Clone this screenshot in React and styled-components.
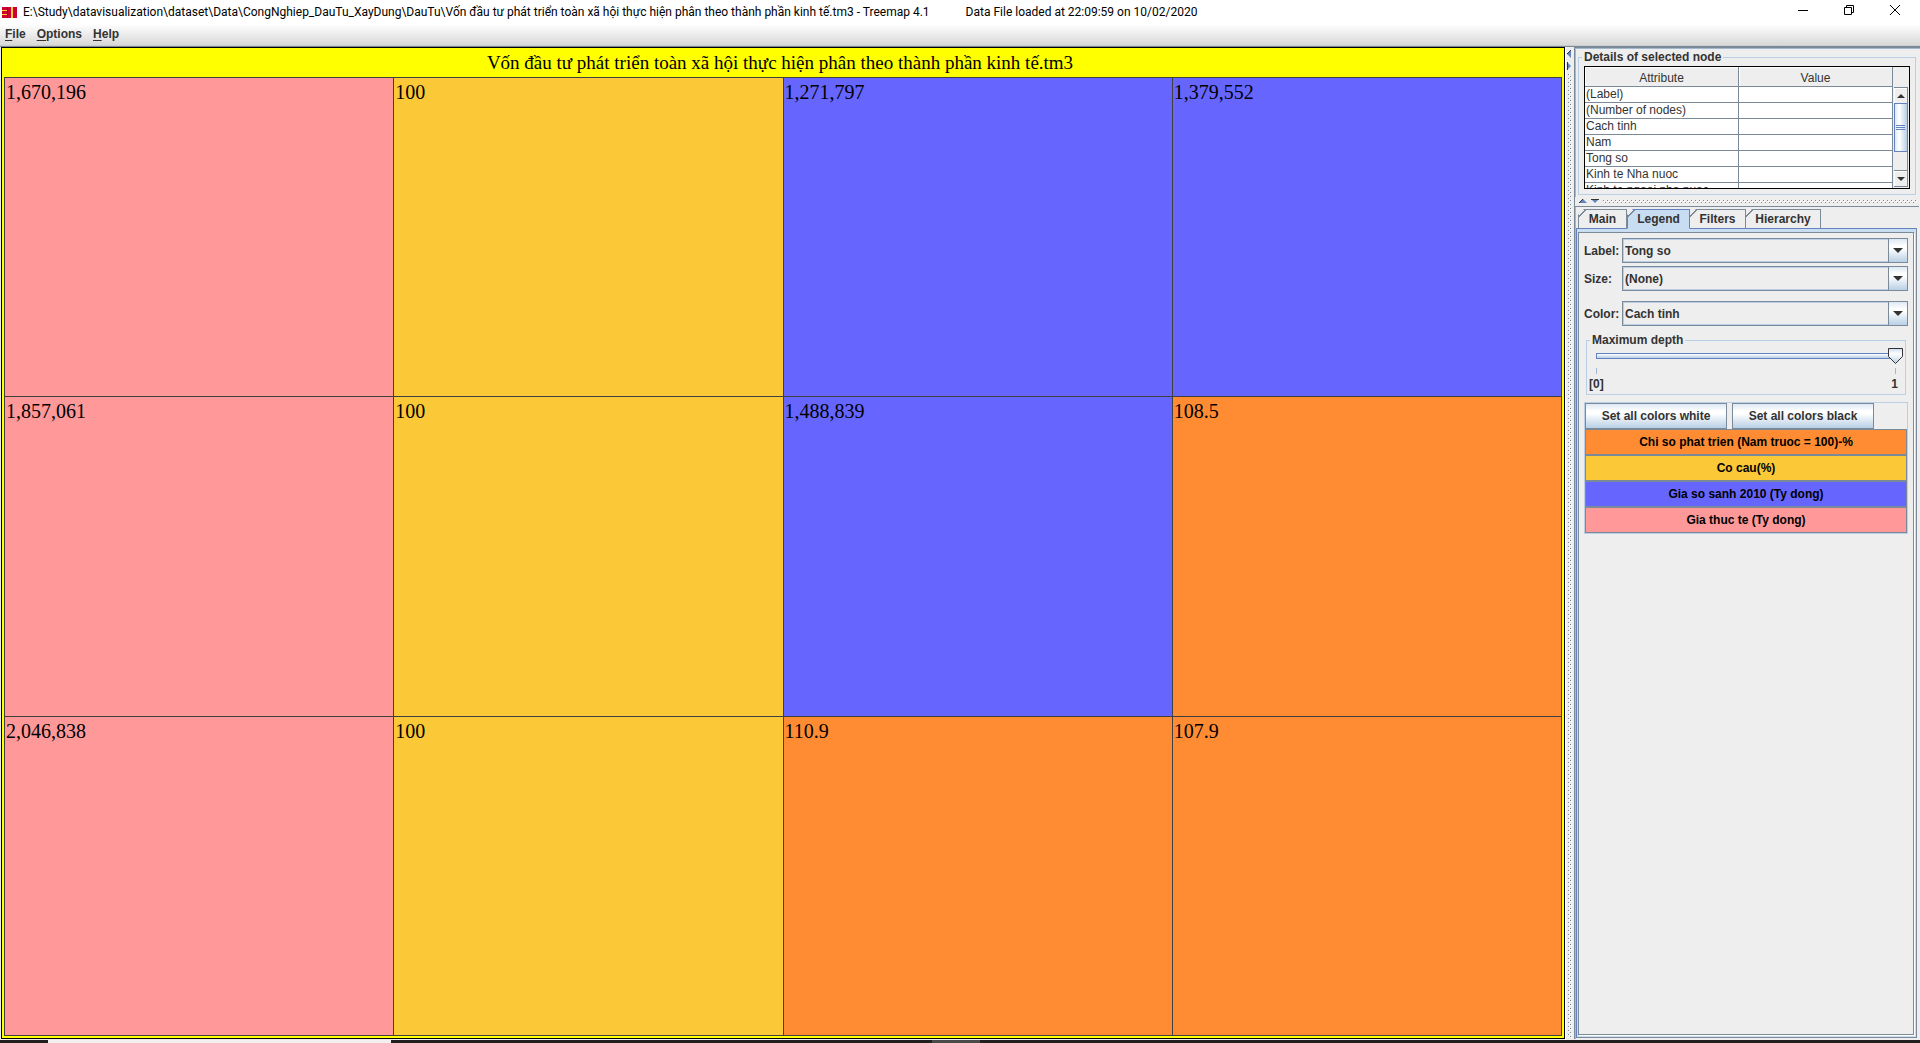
import React, { useState } from "react";
import styled, { createGlobalStyle } from "styled-components";

const steel = "#7a8a99";
const primary = "#6382bf";
const pale = "#b8cfe5";
const ink = "#333333";
const face = "#eeeeee";
const sheen = "linear-gradient(#dde8f3 0%, #ffffff 30%, #ffffff 40%, #b8cfe5 100%)";
const svgUrl = (svg) => `url("data:image/svg+xml,${encodeURIComponent(svg).replace(/'/g, "%27")}")`;
const thumbImage = svgUrl(
  "<svg xmlns='http://www.w3.org/2000/svg' width='15' height='16'><defs><linearGradient id='g' x2='0' y2='1'><stop stop-color='#c8dbee'/><stop offset='.35' stop-color='#fff'/><stop offset='1' stop-color='#b8cfe5'/></linearGradient></defs><path d='M.5.5h14v8l-7 7-7-7z' fill='url(#g)' stroke='#333'/></svg>"
);
const gripImage = svgUrl(
  `<svg xmlns='http://www.w3.org/2000/svg' width='4' height='4'><path d='M0 0h1v1H0zM2 2h1v1H2z' fill='${steel}'/><path d='M1 1h1v1H1zM3 3h1v1H3z' fill='#fff'/></svg>`
);

const Global = createGlobalStyle`
  *, *::before, *::after { box-sizing: border-box; }
  body { margin: 0; background: ${face}; overflow: hidden; }
  button, select, input { font: inherit; color: inherit; margin: 0; border-radius: 0; }
`;

const Window = styled.div`
  height: 100vh;
  display: flex;
  flex-direction: column;
  font: bold 12px/16px "Liberation Sans", Arial, sans-serif;
  color: ${ink};
`;

const TitleBar = styled.header`
  flex: none;
  height: 24px;
  display: flex;
  align-items: center;
  padding-left: 2px;
  background: #fff;
  color: #000;
  font: 12px/16px Roboto, "Open Sans", sans-serif;
  white-space: nowrap;
`;

const AppIcon = styled.svg`
  flex: none;
  margin-right: 6px;
`;

const TitleText = styled.span`
  margin-right: 36px;
`;

const Spacer = styled.span`
  flex: 1;
`;

const WindowButton = styled.button`
  width: 46px;
  height: 20px;
  padding: 0;
  border: 0;
  background: none;
  display: grid;
  place-items: center;
  align-self: start;
`;

const WindowButtons = styled.div`
  display: flex;
  align-self: start;
  padding-right: 2px;
`;

const MenuBar = styled.nav`
  flex: none;
  height: 23px;
  display: flex;
  gap: 11px;
  padding: 2px 5px 0;
  background: linear-gradient(#ffffff, #dadada 20px, #dadada);
  border-bottom: 1px solid ${steel};
  box-shadow: inset 0 -1px #cccccc;
`;

const MenuItem = styled.button`
  padding: 0;
  border: 0;
  background: none;
  height: 16px;
  &::first-letter { text-decoration: underline; text-underline-offset: 2px; }
`;

const Workspace = styled.main`
  flex: 1;
  min-height: 0;
  display: grid;
  grid-template-columns: minmax(0, 1fr) 9px 346px;
`;

const Treemap = styled.section`
  display: flex;
  flex-direction: column;
  border: 1px solid #000;
  margin: 0 0 1px 1px;
  background: #ffff00;
  padding: 0 2px 2px;
  color: #000;
  font: 20px/29px "Liberation Serif", "Times New Roman", serif;
`;

const TreemapTitle = styled.h1`
  margin: 0;
  padding-right: 6px;
  font: inherit;
  font-size: 19px;
  height: 29px;
  text-align: center;
`;

const Cells = styled.div`
  flex: 1;
  display: grid;
  grid-template-columns: repeat(4, 1fr);
  grid-template-rows: repeat(3, 1fr);
  gap: 1px;
  padding: 1px;
  background: #404040;
`;

const Cell = styled.div`
  background: ${(p) => p.$fill};
  padding-left: 1px;
`;

const Divider = styled.div`
  display: flex;
  flex-direction: ${(p) => (p.$vertical ? "column" : "row")};
  gap: 4px;
  padding: ${(p) => (p.$vertical ? "3px 0 2px 1px" : "2px 2px 2px 4px")};
  height: ${(p) => (p.$vertical ? "auto" : "9px")};
  flex: none;
  background: ${face};
  border-left: ${(p) => (p.$vertical ? "1px solid #fff" : "0")};
`;

const Grip = styled.div`
  flex: 1;
  margin: ${(p) => (p.$vertical ? "0 2px 0 1px" : "1px 0")};
  background-image: ${gripImage};
`;

const ArrowButton = styled.button`
  display: block;
  padding: 0;
  border: 0;
  background: none;
  line-height: 0;
  svg { display: block; }
`;

const Side = styled.aside`
  display: flex;
  flex-direction: column;
  min-height: 0;
  border-left: 1px solid ${steel};
  border-top: 1px solid ${steel};
  box-shadow: inset 1px 1px #a3b8cc;
  padding-right: 1px;
  margin-bottom: 1px;
`;

const Group = styled.fieldset`
  min-width: 0;
  margin: ${(p) => p.$margin};
  padding: ${(p) => p.$padding};
  border: 1px solid ${pale};
`;

const Legend = styled.legend`
  padding: 0 2px;
  margin-left: ${(p) => p.$shift}px;
`;

const TableFrame = styled.div`
  display: grid;
  grid-template-columns: minmax(0, 1fr) 16px;
  height: 123px;
  overflow: hidden;
  border: 1px solid #000;
`;

const TableView = styled.div`
  overflow: hidden;
  background: #fff;
`;

const Table = styled.table`
  width: 100%;
  table-layout: fixed;
  border-collapse: separate;
  border-spacing: 0;
  font-weight: normal;
`;

const Head = styled.th`
  height: 20px;
  padding: 2px 0 0;
  background: ${face};
  font-weight: normal;
  border: solid ${steel};
  border-width: 0 1px 1px 0;
  box-shadow: inset 1px 1px #fff;
`;

const Data = styled.td`
  height: 16px;
  padding: 0 1px;
  line-height: 15px;
  border: solid ${steel};
  border-width: 0 1px 1px 0;
  white-space: nowrap;
`;

const ScrollBar = styled.div`
  margin: 20px 1px 1px 1px;
  display: flex;
  flex-direction: column;
  border: solid ${steel};
  border-width: 1px 1px 1px 0;
`;

const ScrollButton = styled.button`
  flex: none;
  height: 15px;
  padding: 0;
  border: 0;
  background: ${face};
  box-shadow: inset 1px 1px #fff;
  display: grid;
  place-items: center;
`;

const ScrollTrack = styled.div`
  flex: 1;
  border-bottom: 1px solid ${steel};
`;

const ScrollThumb = styled.div`
  height: 49px;
  margin: 0 -1px 0 0;
  border: 1px solid ${primary};
  background: linear-gradient(90deg, #dde8f3, #fff 35%, #b8cfe5);
  display: grid;
  place-items: center;
`;

const LowerPanel = styled.div`
  flex: 1;
  min-height: 0;
  display: flex;
  flex-direction: column;
  border-top: 1px solid ${steel};
  padding: 2px 2px 1px 1px;
`;

const TabList = styled.div`
  display: flex;
  padding-left: 2px;
  height: 20px;
  margin-bottom: -1px;
  position: relative;
`;

const Tab = styled.button`
  width: ${(p) => p.$width}px;
  padding: 0;
  border: 1px solid ${(p) => (p.$active ? primary : steel)};
  border-width: 1px 1px 0 ${(p) => (p.$first || p.$active ? 1 : 0)}px;
  border-bottom: 1px solid ${(p) => (p.$active ? "#c8ddf2" : primary)};
  background:
    linear-gradient(135deg, ${face} 4px, ${steel} 4px, ${steel} 5px, transparent 5px),
    ${(p) => (p.$active ? "#c8ddf2" : face)};
  clip-path: polygon(6px 0, 100% 0, 100% 100%, 0 100%, 0 6px);
`;

const Pane = styled.div`
  flex: 1;
  min-height: 0;
  border: 1px solid ${primary};
  border-right-color: ${steel};
  border-bottom-color: ${steel};
  background: #c8ddf2;
  padding: 3px 2px 2px 1px;
`;

const PaneBody = styled.div`
  height: 100%;
  border: 1px solid ${steel};
  box-shadow: 1px 1px #fff;
  background: ${face};
  padding: 5px;
`;

const Field = styled.div`
  display: flex;
  align-items: center;
  margin-bottom: ${(p) => p.$after}px;
`;

const FieldLabel = styled.label`
  width: 38px;
  flex: none;
`;

const SelectBox = styled.div`
  flex: 1;
  display: grid;
  grid-template-columns: 1fr 20px;
  height: 25px;
`;

const Select = styled.select`
  grid-area: 1 / 1 / 2 / 3;
  appearance: none;
  width: 100%;
  padding: 0 22px 0 2px;
  border: 1px solid ${steel};
  box-shadow: inset 0 0 0 1px ${pale};
  background: ${face};
  outline: 0;
`;

const SelectArrow = styled.span`
  grid-area: 1 / 2;
  z-index: 1;
  pointer-events: none;
  display: grid;
  place-items: center;
  border: 1px solid ${steel};
  background: ${sheen};
`;

const Range = styled.input`
  display: block;
  appearance: none;
  width: 100%;
  height: 16px;
  background: none;
  outline: 0;
  &::-webkit-slider-runnable-track {
    height: 16px;
    background:
      linear-gradient(#fff, #b8cfe5) center / calc(100% - 16px) 4px no-repeat,
      linear-gradient(${primary}, ${primary}) center / calc(100% - 14px) 6px no-repeat;
  }
  &::-webkit-slider-thumb {
    appearance: none;
    width: 15px;
    height: 16px;
    background: ${thumbImage};
  }
`;

const Scale = styled.div`
  display: flex;
  justify-content: space-between;
  padding: 0 ${(p) => p.$inset}px;
`;

const Tick = styled.span`
  width: 1px;
  height: 6px;
  margin: 4px 0 2px;
  background: #a3b8cc;
`;

const ButtonRow = styled.div`
  display: flex;
  gap: 5px;
`;

const PushButton = styled.button`
  width: 142px;
  height: 26px;
  padding: 0;
  border: 1px solid ${steel};
  background: ${sheen};
`;

const ColorButton = styled.button`
  display: block;
  width: 100%;
  height: 26px;
  padding: 0;
  border: 1px solid ${steel};
  background: ${(p) => p.$fill};
  color: #000;
`;

const TaskStrip = styled.footer`
  flex: none;
  height: 3px;
  display: flex;
  background: #231f20;
`;

const TaskSegment = styled.span`
  width: ${(p) => p.$width}px;
  background: ${(p) => p.$fill};
`;

const colors = { pink: "#ff9999", yellow: "#fbc937", blue: "#6666ff", orange: "#ff8c33" };

const cells = [
  ["1,670,196", "pink"], ["100", "yellow"], ["1,271,797", "blue"], ["1,379,552", "blue"],
  ["1,857,061", "pink"], ["100", "yellow"], ["1,488,839", "blue"], ["108.5", "orange"],
  ["2,046,838", "pink"], ["100", "yellow"], ["110.9", "orange"], ["107.9", "orange"],
];

const attributes = ["(Label)", "(Number of nodes)", "Cach tinh", "Nam", "Tong so", "Kinh te Nha nuoc", "Kinh te ngoai nha nuoc"];

const tabs = [["Main", 49], ["Legend", 63], ["Filters", 56], ["Hierarchy", 75]];

const legendRows = [
  ["Chi so phat trien (Nam truoc = 100)-%", "orange"],
  ["Co cau(%)", "yellow"],
  ["Gia so sanh 2010 (Ty dong)", "blue"],
  ["Gia thuc te (Ty dong)", "pink"],
];

const taskSegments = [[48, "#231f20"], [343, "#f2f0f1"], [541, "#231f20"], [48, "#4a4a4a"]];

function Triangle({ up, small }) {
  const w = small ? 8 : 10;
  const h = w / 2;
  return (
    <svg width={w} height={h} aria-hidden="true">
      <path d={up ? `M0 ${h}L${h} 0L${w} ${h}z` : `M0 0H${w}L${h} ${h}z`} fill={ink} />
    </svg>
  );
}

function SplitArrow({ path, edge, w, h, label }) {
  return (
    <ArrowButton aria-label={label}>
      <svg width={w} height={h} aria-hidden="true">
        <path d={path} fill={primary} />
        <path d={edge} fill="none" stroke={ink} />
      </svg>
    </ArrowButton>
  );
}

function Dropdown({ id, label, options, after }) {
  return (
    <Field $after={after}>
      <FieldLabel htmlFor={id}>{label}</FieldLabel>
      <SelectBox>
        <Select id={id}>
          {options.map((o) => <option key={o}>{o}</option>)}
        </Select>
        <SelectArrow><Triangle /></SelectArrow>
      </SelectBox>
    </Field>
  );
}

export default function App() {
  const [tab, setTab] = useState("Legend");
  const [depth, setDepth] = useState(1);
  return (
    <Window>
      <Global />
      <TitleBar>
        <AppIcon width="15" height="11" viewBox="0 0 15 11" aria-hidden="true">
          <path d="M0 0h15v11H0z" fill="#ffcc33" />
          <path d="M0 0h5v3H0zM0 4h5v3H0zM0 8h5v3H0zM6 0h3v11H6zM11 0h4v11h-4z" fill="#cc0033" />
          <path d="M5.5 0v11" stroke="#333" />
        </AppIcon>
        <TitleText>{"E:\\Study\\datavisualization\\dataset\\Data\\CongNghiep_DauTu_XayDung\\DauTu\\Vốn đầu tư phát triển toàn xã hội thực hiện phân theo thành phần kinh tế.tm3 - Treemap 4.1"}</TitleText>
        <TitleText>Data File loaded at 22:09:59 on 10/02/2020</TitleText>
        <Spacer />
        <WindowButtons>
          <WindowButton aria-label="Minimize">
            <svg width="10" height="10"><path d="M0 5.5h10" stroke="#000" /></svg>
          </WindowButton>
          <WindowButton aria-label="Restore">
            <svg width="10" height="10"><path d="M.5 2.5h7v7h-7zM2.5 2.5v-2h7v7h-2" fill="none" stroke="#000" /></svg>
          </WindowButton>
          <WindowButton aria-label="Close">
            <svg width="10" height="10"><path d="M0 0l10 10M10 0L0 10" stroke="#000" /></svg>
          </WindowButton>
        </WindowButtons>
      </TitleBar>
      <MenuBar>
        <MenuItem>File</MenuItem>
        <MenuItem>Options</MenuItem>
        <MenuItem>Help</MenuItem>
      </MenuBar>
      <Workspace>
        <Treemap>
          <TreemapTitle>Vốn đầu tư phát triển toàn xã hội thực hiện phân theo thành phần kinh tế.tm3</TreemapTitle>
          <Cells>
            {cells.map(([value, color], i) => <Cell key={i} $fill={colors[color]}>{value}</Cell>)}
          </Cells>
        </Treemap>
        <Divider $vertical>
          <SplitArrow label="Collapse left" w={5} h={8} path="M4 0v8L0 4z" edge="M4 0L0 4" />
          <SplitArrow label="Collapse right" w={5} h={8} path="M0 0v8l4-4z" edge="M.5 0v8" />
          <Grip $vertical />
        </Divider>
        <Side>
          <Group $margin="1px 3px 2px" $padding="1px 5px 5px">
            <Legend $shift={-2}>Details of selected node</Legend>
            <TableFrame>
              <TableView>
                <Table>
                  <thead>
                    <tr><Head>Attribute</Head><Head>Value</Head></tr>
                  </thead>
                  <tbody>
                    {attributes.map((a) => <tr key={a}><Data>{a}</Data><Data /></tr>)}
                  </tbody>
                </Table>
              </TableView>
              <ScrollBar>
                <ScrollButton aria-label="Scroll up"><Triangle up small /></ScrollButton>
                <ScrollTrack>
                  <ScrollThumb>
                    <svg width="10" height="6" aria-hidden="true"><path d="M0 .5h9M0 2.5h9M0 4.5h9" stroke={primary} /></svg>
                  </ScrollThumb>
                </ScrollTrack>
                <ScrollButton aria-label="Scroll down"><Triangle small /></ScrollButton>
              </ScrollBar>
            </TableFrame>
          </Group>
          <Divider>
            <SplitArrow label="Collapse up" w={8} h={5} path="M0 4h8L4 0z" edge="M0 4L4 0" />
            <SplitArrow label="Collapse down" w={8} h={5} path="M0 0h8L4 4z" edge="M0 .5h8" />
            <Grip />
          </Divider>
          <LowerPanel>
            <TabList role="tablist">
              {tabs.map(([name, width], i) => (
                <Tab key={name} role="tab" aria-selected={tab === name} $active={tab === name} $first={i === 0} $width={width} onClick={() => setTab(name)}>{name}</Tab>
              ))}
            </TabList>
            <Pane>
              <PaneBody>
                <Dropdown id="label" label="Label:" options={["Tong so", "(None)"]} after={3} />
                <Dropdown id="size" label="Size:" options={["(None)", "Tong so"]} after={10} />
                <Dropdown id="color" label="Color:" options={["Cach tinh", "Nam"]} after={6} />
                <Group $margin="0 2px 7px" $padding="0 2px 2px">
                  <Legend $shift={1}>Maximum depth</Legend>
                  <Range type="range" min="0" max="1" value={depth} aria-label="Maximum depth" onChange={(e) => setDepth(+e.target.value)} />
                  <Scale $inset={7}><Tick /><Tick /></Scale>
                  <Scale $inset={0}><span>[0]</span><Scale $inset={5}>1</Scale></Scale>
                </Group>
                <Group $margin="0" $padding="0">
                  <ButtonRow>
                    <PushButton>Set all colors white</PushButton>
                    <PushButton>Set all colors black</PushButton>
                  </ButtonRow>
                  {legendRows.map(([text, color]) => <ColorButton key={text} $fill={colors[color]}>{text}</ColorButton>)}
                </Group>
              </PaneBody>
            </Pane>
          </LowerPanel>
        </Side>
      </Workspace>
      <TaskStrip>
        {taskSegments.map(([width, fill], i) => <TaskSegment key={i} $width={width} $fill={fill} />)}
      </TaskStrip>
    </Window>
  );
}
